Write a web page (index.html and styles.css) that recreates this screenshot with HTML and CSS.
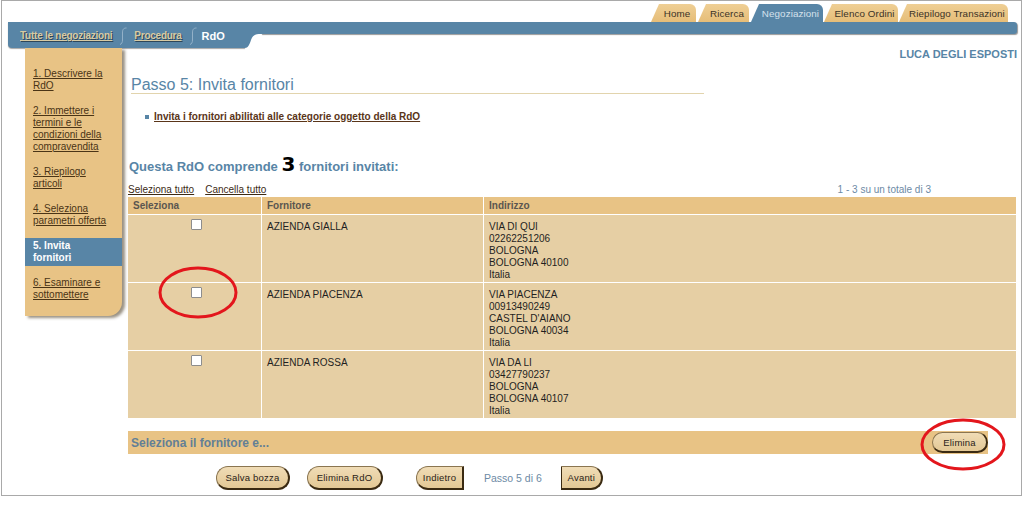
FILE: index.html
```html
<!DOCTYPE html>
<html lang="it">
<head>
<meta charset="utf-8">
<title>Passo 5: Invita fornitori</title>
<link rel="stylesheet" href="styles.css">
</head>
<body>
<div class="frame">
  <header class="masthead">
    <nav class="tabs">
      <a class="tab tab-home">Home</a>
      <a class="tab tab-search">Ricerca</a>
      <a class="tab tab-active tab-neg">Negoziazioni</a>
      <a class="tab tab-orders">Elenco Ordini</a>
      <a class="tab tab-summary">Riepilogo Transazioni</a>
    </nav>
    <div class="bar">
      <div class="crumbs">
        <a class="crumb">Tutte le negoziazioni</a>
        <svg class="sep" viewBox="0 0 7 18" width="7" height="18"><path d="M6.5 1 C3 1 2.5 3 2.5 6 V13 C2.5 15.5 1.5 17 0 17.5" fill="none" stroke="#93b1c8" stroke-width="1"/></svg>
        <a class="crumb">Procedura</a>
        <svg class="sep" viewBox="0 0 7 18" width="7" height="18"><path d="M6.5 1 C3 1 2.5 3 2.5 6 V13 C2.5 15.5 1.5 17 0 17.5" fill="none" stroke="#93b1c8" stroke-width="1"/></svg>
        <span class="crumb-current">RdO</span>
      </div>
      <svg class="bar-curve" viewBox="0 0 16 26" width="16" height="26"><path d="M0 0 H16 V12 C10 12 8 13 6 18 C4.5 22.5 3 26 0 26 Z" fill="#5885a6"/></svg>
      <div class="band"></div>
    </div>
  </header>

  <div class="layout">
    <aside class="steps">
      <a class="step">1. Descrivere la RdO</a>
      <a class="step">2. Immettere i termini e le condizioni della compravendita</a>
      <a class="step">3. Riepilogo articoli</a>
      <a class="step">4. Seleziona parametri offerta</a>
      <span class="step step-active">5. Invita fornitori</span>
      <a class="step">6. Esaminare e sottomettere</a>
    </aside>

    <main class="content">
      <div class="user">LUCA DEGLI ESPOSTI</div>
      <h1 class="title">Passo 5: Invita fornitori</h1>
      <p class="invite"><span class="bullet"></span><a class="invite-link">Invita i fornitori abilitati alle categorie oggetto della RdO</a></p>
      <p class="summary">Questa RdO comprende <span class="count">3</span> fornitori invitati:</p>
      <div class="listbar">
        <div class="select-links"><a class="plain-link">Seleziona tutto</a><a class="plain-link">Cancella tutto</a></div>
        <div class="paging">1 - 3 su un totale di 3</div>
      </div>
      <table class="suppliers">
        <thead>
          <tr><th class="c-sel">Seleziona</th><th class="c-name">Fornitore</th><th class="c-addr">Indirizzo</th></tr>
        </thead>
        <tbody>
          <tr>
            <td class="c-sel"><input type="checkbox" class="check"></td>
            <td class="c-name">AZIENDA GIALLA</td>
            <td class="c-addr">VIA DI QUI<br>02262251206<br>BOLOGNA<br>BOLOGNA 40100<br>Italia</td>
          </tr>
          <tr>
            <td class="c-sel"><input type="checkbox" class="check"></td>
            <td class="c-name">AZIENDA PIACENZA</td>
            <td class="c-addr">VIA PIACENZA<br>00913490249<br>CASTEL D'AIANO<br>BOLOGNA 40034<br>Italia</td>
          </tr>
          <tr>
            <td class="c-sel"><input type="checkbox" class="check"></td>
            <td class="c-name">AZIENDA ROSSA</td>
            <td class="c-addr">VIA DA LI<br>03427790237<br>BOLOGNA<br>BOLOGNA 40107<br>Italia</td>
          </tr>
        </tbody>
      </table>
      <div class="actionbar">
        <span class="actionbar-label">Seleziona il fornitore e...</span>
        <button class="btn btn-delete">Elimina</button>
      </div>
      <div class="buttons">
        <button class="btn btn-save">Salva bozza</button>
        <button class="btn btn-drop">Elimina RdO</button>
        <button class="btn btn-back">Indietro</button>
        <span class="step-count">Passo 5 di 6</span>
        <button class="btn btn-next">Avanti</button>
      </div>
    </main>
  </div>

  <svg class="mark mark-check" viewBox="0 0 80 53" width="80" height="53"><ellipse cx="40" cy="26.5" rx="38" ry="24.5" fill="none" stroke="#e3161c" stroke-width="3"/></svg>
  <svg class="mark mark-delete" viewBox="0 0 86 53" width="86" height="53"><ellipse cx="43" cy="26.5" rx="41" ry="24.5" fill="none" stroke="#e3161c" stroke-width="3"/></svg>
</div>
</body>
</html>
```

FILE: styles.css
```css
* { box-sizing: border-box; }

html, body {
  margin: 0;
  padding: 0;
  background: #ffffff;
}

body {
  font-family: "Liberation Sans", Arial, sans-serif;
  font-size: 10px;
  color: #1e1e1e;
}

.frame {
  position: relative;
  margin-left: 1px;
  width: 1021px;
  height: 496px;
  border: 1px solid #a9a9a9;
  overflow: hidden;
}

/* ---------- masthead ---------- */
.tabs {
  display: flex;
  justify-content: flex-end;
  padding: 3px 13px 0 0;
  height: 21px;
}

.tab {
  display: block;
  height: 18px;
  line-height: 19px;
  padding-left: 7px;
  margin-left: 1px;
  text-align: center;
  font-size: 9.8px;
  color: #3b3226;
  background: linear-gradient(#efcf95, #e6bd78);
  clip-path: polygon(8px 0, 100% 0, 100% 100%, 0 100%);
  border-top-right-radius: 6px;
  letter-spacing: 0.1px;
}

.tab-home { width: 45px; }
.tab-search { width: 51px; margin-left: 2px; }
.tab-neg { width: 72px; margin-left: 2px; }
.tab-orders { width: 74px; }
.tab-summary { width: 109px; }

.tab-active {
  background: #5885a6;
  color: #d5e1ec;
}

.bar {
  display: flex;
  align-items: flex-start;
  height: 26px;
  margin: 0 4px 0 6px;
}

.crumbs {
  display: flex;
  align-items: center;
  width: 237px;
  height: 26px;
  padding: 1px 0 0 12px;
  background: #5885a6;
  border-bottom-left-radius: 4px;
  box-shadow: 0 1px 1px rgba(0, 0, 0, 0.35);
}

.crumb {
  font-size: 10px;
  font-weight: bold;
  color: #d8cba4;
  text-decoration: underline;
  text-shadow: 1px 1px 0 #2d4659;
  letter-spacing: -0.25px;
}

.sep {
  display: block;
  margin: 0 7px 0 8px;
}

.crumb-current {
  font-size: 11px;
  font-weight: bold;
  color: #ffffff;
  margin-left: -2px;
}

.bar-curve {
  display: block;
  flex: none;
}

.band {
  flex: 1;
  height: 12px;
  background: #5885a6;
  border-radius: 0 3px 3px 0;
  box-shadow: 1px 1px 1px rgba(0, 0, 0, 0.4);
}

/* ---------- layout ---------- */
.layout {
  display: flex;
  align-items: flex-start;
}

.steps {
  display: flex;
  flex-direction: column;
  gap: 9px;
  width: 97px;
  margin-left: 23px;
  padding: 18px 0 13px;
  background: #e8c385;
  border-bottom-right-radius: 14px;
  box-shadow: 3px 2px 3px rgba(70, 55, 30, 0.55);
}

.step {
  display: block;
  padding: 2px 13px 2px 8px;
  font-size: 10px;
  line-height: 12px;
  color: #4a3416;
  text-decoration: underline;
}

.step-active {
  background: #5885a6;
  color: #ffffff;
  font-weight: bold;
  text-decoration: none;
}

.content {
  width: 889px;
  margin-left: 6px;
}

.user {
  text-align: right;
  font-size: 11px;
  line-height: 13px;
  font-weight: bold;
  color: #5885a6;
}

.title {
  width: 573px;
  margin: 15px 0 0 3px;
  font-size: 16px;
  line-height: 17px;
  font-weight: normal;
  color: #5885a6;
  border-bottom: 1px solid #e2d4ad;
}

.invite {
  margin: 16px 0 0;
  padding-left: 17px;
  line-height: 13px;
}

.bullet {
  display: inline-block;
  width: 4px;
  height: 4px;
  margin: 0 5px 1px 0;
  background: #5885a6;
  vertical-align: middle;
}

.invite-link {
  font-weight: bold;
  color: #5a3519;
  text-decoration: underline;
}

.summary {
  margin: 31px 0 0 1px;
  line-height: 20px;
  font-size: 13px;
  font-weight: bold;
  color: #5885a6;
}

.count {
  font-size: 20px;
  color: #000000;
  font-family: "DejaVu Sans", sans-serif;
}

.listbar {
  display: flex;
  justify-content: space-between;
  margin-top: 6px;
  line-height: 13px;
  padding-right: 86px;
}

.plain-link {
  color: #3c2a14;
  text-decoration: underline;
  margin-right: 11px;
}

.paging {
  color: #6d8aa5;
}

.suppliers {
  width: 888px;
  margin-top: 1px;
  border-collapse: separate;
  border-spacing: 0;
  table-layout: fixed;
}

.suppliers th {
  height: 18px;
  padding: 0 5px;
  background: #e8c385;
  text-align: left;
  font-weight: bold;
  color: #5a5650;
  border-right: 1px solid #ffffff;
  border-bottom: 1px solid #ffffff;
}

.suppliers td {
  height: 68px;
  padding: 6px 5px 1px;
  vertical-align: top;
  line-height: 12px;
  background: #e6cfa4;
  color: #1f1f1f;
  border-right: 1px solid #ffffff;
  border-bottom: 1px solid #ffffff;
}

.suppliers tr > :last-child { border-right: 0; }
.suppliers tbody tr:last-child td { border-bottom: 0; height: 67px; }

.c-sel { width: 134px; }
.c-name { width: 222px; }

.suppliers td.c-sel {
  text-align: center;
  padding-left: 9px;
  padding-top: 4px;
}

.check {
  appearance: none;
  -webkit-appearance: none;
  display: inline-block;
  width: 11px;
  height: 11px;
  margin: 0;
  background: #ffffff;
  border: 1px solid #8d8d8d;
  border-radius: 1px;
}

.actionbar {
  display: flex;
  justify-content: space-between;
  align-items: center;
  width: 860px;
  height: 23px;
  margin-top: 13px;
  padding-left: 3px;
  background: #e8c385;
}

.actionbar-label {
  font-size: 12px;
  font-weight: bold;
  color: #627f96;
}

.btn {
  font-family: "Liberation Sans", Arial, sans-serif;
  font-size: 9.5px;
  color: #2a2218;
  height: 24px;
  padding: 0;
  background: linear-gradient(#f0dcb6, #e3c895);
  border: 1px solid #8a7550;
  border-right: 2px solid #3a2a12;
  border-bottom: 2px solid #3a2a12;
  border-radius: 12px;
  letter-spacing: 0.2px;
}

.btn-delete {
  width: 56px;
  height: 21px;
  border-radius: 11px;
}

.buttons {
  display: flex;
  align-items: center;
  margin-top: 12px;
  padding-left: 88px;
}

.btn-save { width: 74px; }
.btn-drop { width: 76px; margin-left: 17px; }
.btn-back { width: 48px; margin-left: 33px; border-radius: 12px 0 0 12px; }
.btn-next { width: 42px; border-radius: 0 12px 12px 0; border-left-color: #3a2a12; }

.step-count {
  margin: 0 19px 0 20px;
  font-size: 10.5px;
  color: #6d8aa5;
}

/* ---------- annotations ---------- */
.mark {
  position: absolute;
  pointer-events: none;
}

.mark-check { left: 156px; top: 265px; }
.mark-delete { left: 918px; top: 417px; }
```
